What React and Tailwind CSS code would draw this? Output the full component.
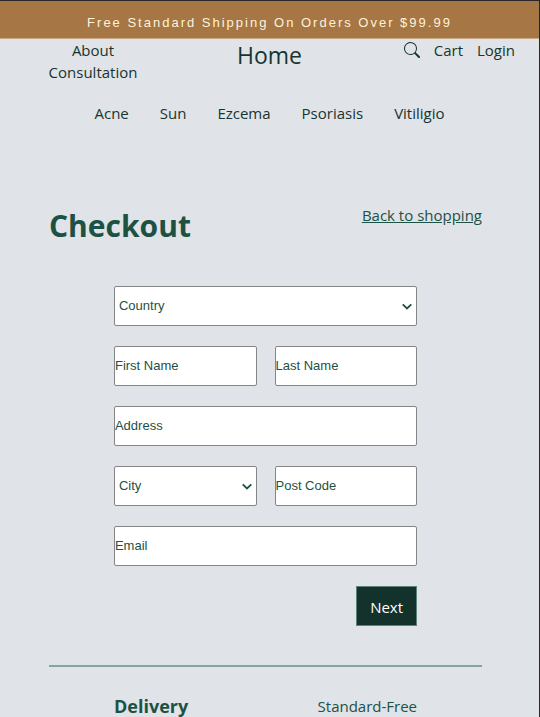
import React from "react";

const field =
  "block h-10 w-full rounded-xs border border-[#858585] bg-white font-['Liberation_Sans',Arial,sans-serif] text-[13px] text-[#1d5144]";
const inputField = field + " pb-0.5 placeholder:text-[#1d5144] placeholder:opacity-100";

function TextField({ label, type = "text", name }) {
  return <input className={inputField} type={type} name={name} placeholder={label} aria-label={label} />;
}

function SelectField({ label, name }) {
  return (
    <div className="relative">
      <select className={field + " appearance-none pl-1"} name={name} aria-label={label}>
        <option>{label}</option>
      </select>
      <svg
        className="pointer-events-none absolute right-1 top-4 h-3 w-3"
        viewBox="0 0 12 12"
        fill="none"
        stroke="#1d5144"
        strokeWidth="1.8"
        aria-hidden="true"
      >
        <path d="M1.7 2.4 6 6.5l4.3-4.1" />
      </svg>
    </div>
  );
}

function SearchIcon() {
  return (
    <svg className="h-4 w-4" viewBox="0 0 16 16" fill="currentColor" aria-hidden="true">
      <path d="M11.742 10.344a6.5 6.5 0 1 0-1.397 1.398h-.001q.044.06.098.115l3.85 3.85a1 1 0 0 0 1.415-1.414l-3.85-3.85a1 1 0 0 0-.115-.1zM12 6.5a5.5 5.5 0 1 1-11 0 5.5 5.5 0 0 1 11 0" />
    </svg>
  );
}

const categories = ["Acne", "Sun", "Ezcema", "Psoriasis", "Vitiligio"];

export default function App() {
  return (
    <div className="min-h-screen border-r border-t border-[#26262b] bg-[#e0e3e8] font-['Open_Sans','Noto_Sans',sans-serif] text-[15px] leading-[22px] text-[#1d5144]">
      <p className="border-b border-[#c9a888] bg-[#a67645] pb-1 pt-[11px] text-center font-['Liberation_Sans',Arial,sans-serif] text-[13px] tracking-[2px] text-[#fdf3dc]">
        Free Standard Shipping On Orders Over $99.99
      </p>

      <header className="text-[#17352f]">
        <div className="grid grid-cols-3 items-start pl-12 pr-6">
          <nav className="flex w-[90px] flex-col items-center">
            <a href="#about">About</a>
            <a href="#consultation">Consultation</a>
          </nav>
          <a href="#home" className="mr-6 pt-0.5 text-center text-[23px] leading-7">
            Home
          </a>
          <nav className="flex justify-end gap-3.5">
            <button type="button" aria-label="Search">
              <SearchIcon />
            </button>
            <a href="#cart">Cart</a>
            <a href="#login">Login</a>
          </nav>
        </div>
        <nav className="mt-[19px] flex justify-center gap-[31px]">
          {categories.map((name) => (
            <a key={name} href={"#" + name.toLowerCase()}>
              {name}
            </a>
          ))}
        </nav>
      </header>

      <main className="overflow-hidden pl-[49px] pr-[57px] pt-20">
        <div className="flex items-start justify-between">
          <h1 className="pt-0.5 text-[30px] font-bold leading-10">Checkout</h1>
          <a href="#shop" className="underline">
            Back to shopping
          </a>
        </div>

        <form className="mx-auto mt-10 grid w-[70%] grid-cols-2 gap-x-[18px] gap-y-5">
          <div className="col-span-2">
            <SelectField label="Country" name="country" />
          </div>
          <TextField label="First Name" name="firstName" />
          <TextField label="Last Name" name="lastName" />
          <div className="col-span-2">
            <TextField label="Address" name="address" />
          </div>
          <SelectField label="City" name="city" />
          <TextField label="Post Code" name="postCode" />
          <div className="col-span-2">
            <TextField label="Email" type="email" name="email" />
          </div>
          <button
            type="button"
            className="col-span-2 h-10 justify-self-end border border-[#5d8379] bg-[#12322b] px-[13px] pt-0.5 text-white"
          >
            Next
          </button>
        </form>

        <hr className="mt-[39px] border-t-2 border-[#83a69e]" />

        <section className="mx-auto mt-7 flex w-[70%] items-center justify-between">
          <h2 className="text-[18px] font-bold">Delivery</h2>
          <p>Standard-Free</p>
        </section>
      </main>
    </div>
  );
}
